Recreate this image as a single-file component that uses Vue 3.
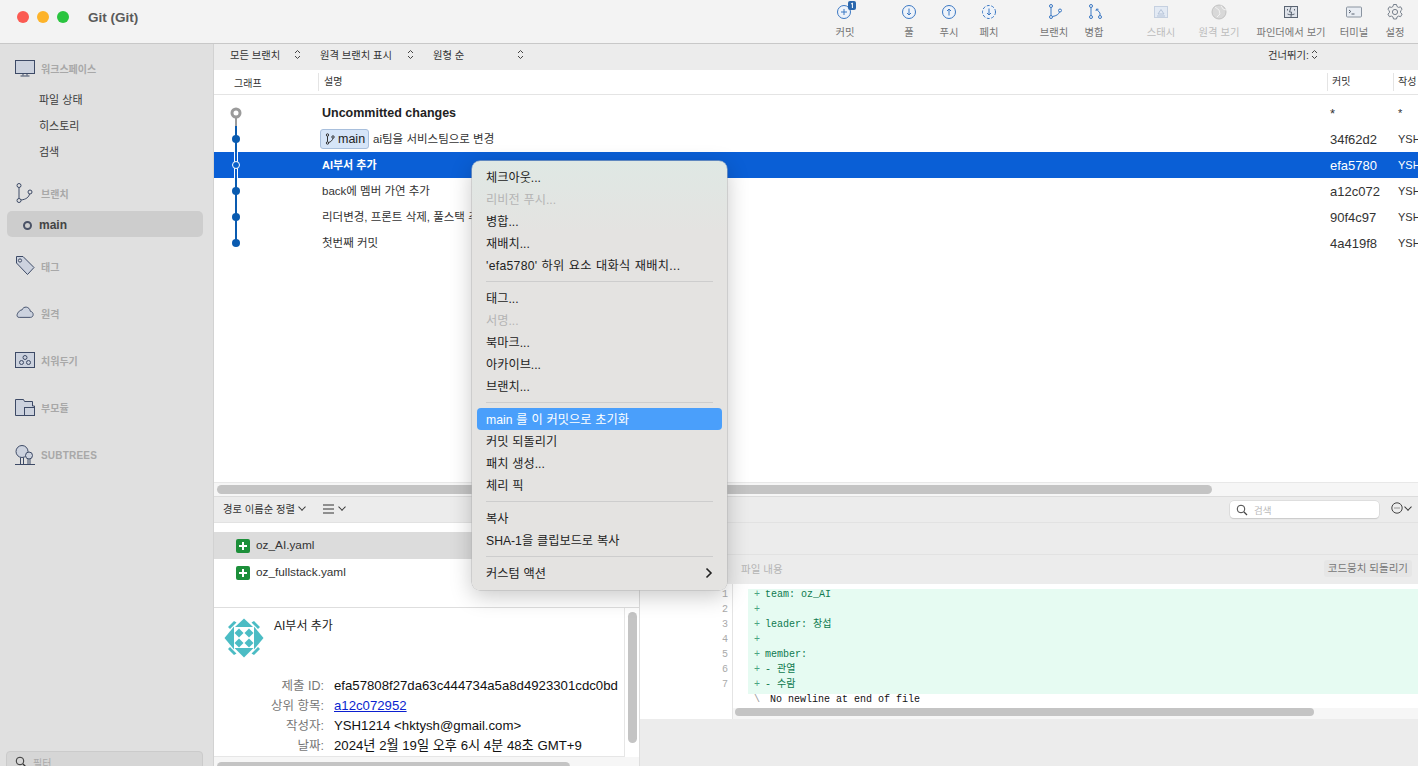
<template>
  <div class="window">
    <!-- 타이틀바 -->
    <header class="titlebar">
      <div class="lights">
        <span class="light red"></span>
        <span class="light yellow"></span>
        <span class="light green"></span>
      </div>
      <div class="win-title">Git (Git)</div>
      <div class="tools">
        <div class="tool w40">
          <svg class="ti" width="24" height="20" viewBox="0 0 24 20">
            <circle cx="11" cy="12" r="6.5" fill="#eef3fa" stroke="#3b78c3" />
            <path d="M11 9v6M8 12h6" stroke="#3b78c3" fill="none" />
            <rect x="15" y="1" width="8" height="9" rx="2" fill="#2b67ad" />
            <path d="M19.400 3v5M18 4.200l1.400-1.200" stroke="#fff" fill="none" />
          </svg>
          <span>커밋</span>
        </div>
        <div class="tool w40 gap24">
          <svg class="ti" width="24" height="20" viewBox="0 0 24 20">
            <circle cx="12" cy="12" r="6.5" fill="#eef3fa" stroke="#3b78c3" />
            <path d="M12 8.500v6.500M10 13l2 2 2-2" stroke="#3b78c3" fill="none" />
          </svg>
          <span>풀</span>
        </div>
        <div class="tool w40">
          <svg class="ti" width="24" height="20" viewBox="0 0 24 20">
            <circle cx="12" cy="12" r="6.5" fill="#eef3fa" stroke="#3b78c3" />
            <path d="M12 15.500V9M10 11l2-2 2 2" stroke="#3b78c3" fill="none" />
          </svg>
          <span>푸시</span>
        </div>
        <div class="tool w40">
          <svg class="ti" width="24" height="20" viewBox="0 0 24 20">
            <circle cx="12" cy="12" r="6.5" fill="#eef3fa" stroke="#3b78c3" stroke-dasharray="3 1.600" />
            <path d="M12 8.500v6.500M10 13l2 2 2-2" stroke="#3b78c3" fill="none" />
          </svg>
          <span>페치</span>
        </div>
        <div class="tool w40 gap25">
          <svg class="ti" width="24" height="20" viewBox="0 0 24 20">
            <g fill="none" stroke="#3b78c3">
              <circle cx="9" cy="6" r="1.500" />
              <circle cx="9" cy="17" r="1.500" />
              <circle cx="18" cy="10.500" r="1.500" />
              <path d="M9 7.500v8M10.400 16.500c4-.5 6.600-2.500 7.200-4.600" />
            </g>
          </svg>
          <span>브랜치</span>
        </div>
        <div class="tool w40">
          <svg class="ti" width="24" height="20" viewBox="0 0 24 20">
            <g fill="none" stroke="#3b78c3">
              <circle cx="9" cy="6" r="1.500" />
              <circle cx="9" cy="17" r="1.500" />
              <circle cx="18" cy="17" r="1.500" />
              <path d="M9 7.500v8M14.500 9l3.500 4v2.500M14 11l.5-2 2 .3" />
            </g>
          </svg>
          <span>병합</span>
        </div>
        <div class="tool w40 off gap27">
          <svg class="ti" width="24" height="20" viewBox="0 0 24 20">
            <rect x="5.500" y="6.500" width="13" height="11" fill="#e3eaf4" stroke="#c5d0e0" />
            <path d="M9 14l3-4.500 3 4.500zM8 16h8" fill="none" stroke="#b5c3d8" />
          </svg>
          <span>스태시</span>
        </div>
        <div class="tool w76 off">
          <svg class="ti" width="24" height="20" viewBox="0 0 24 20">
            <circle cx="12" cy="12" r="7" fill="#d8d8d8" stroke="#c2c2c2" />
            <path d="M8 7l4 3 1 4-3 3M14 5.500l2 3.500 3 1" fill="none" stroke="#f0f0f0" />
          </svg>
          <span>원격 보기</span>
        </div>
        <div class="tool w68">
          <svg class="ti" width="24" height="20" viewBox="0 0 24 20">
            <rect x="5.500" y="6.500" width="13" height="11" fill="#dfe3ea" stroke="#5a6472" />
            <path d="M12 7l-1.500 5h2l-.5 5M8.500 9v1.500M15.500 9v1.500M8.500 14c2 1 5 1 7 0" fill="none" stroke="#5a6472" />
          </svg>
          <span>파인더에서 보기</span>
        </div>
        <div class="tool w58">
          <svg class="ti" width="24" height="20" viewBox="0 0 24 20">
            <rect x="4.500" y="7" width="15" height="10" rx="1" fill="#e9edf3" stroke="#8a94a0" />
            <path d="M7 10l1.800 1.500L7 13M9.500 14h3" fill="none" stroke="#56606e" />
          </svg>
          <span>터미널</span>
        </div>
        <div class="tool w24">
          <svg class="ti" width="24" height="20" viewBox="0 0 24 20">
            <path d="M10.500 4.500h3l.5 2 1.600.9 2-.6 1.500 2.600-1.500 1.400v1.900l1.500 1.400-1.500 2.600-2-.6-1.600.9-.5 2h-3l-.5-2-1.600-.9-2 .6-1.500-2.600 1.500-1.400v-1.900L4.900 9.400l1.500-2.600 2 .6 1.600-.9z" fill="#efefef" stroke="#77808c" />
            <circle cx="12" cy="12" r="2.600" fill="none" stroke="#77808c" />
          </svg>
          <span>설정</span>
        </div>
      </div>
    </header>

    <div class="body">
      <!-- 사이드바 -->
      <aside class="sidebar">
        <section class="side-sec tight">
          <div class="side-head">
            <svg width="20" height="20" viewBox="0 0 20 20">
              <rect x=".5" y="2.500" width="19" height="13" fill="#ccd2de" stroke="#3d4a66" />
              <path d="M8 15.500v2M12 15.500v2M5.500 18h9" stroke="#3d4a66" fill="none" />
            </svg>
            <span>워크스페이스</span>
          </div>
          <div class="side-item">파일 상태</div>
          <div class="side-item">히스토리</div>
          <div class="side-item">검색</div>
        </section>

        <section class="side-sec tight">
          <div class="side-head">
            <svg width="20" height="20" viewBox="0 0 20 20">
              <g fill="none" stroke="#3d4a66">
                <circle cx="4" cy="2.500" r="2" />
                <circle cx="4" cy="17.500" r="2" />
                <circle cx="15" cy="9" r="2" />
                <path d="M4 4.500v11M6 17c5-.5 8-3 8.500-6" />
              </g>
            </svg>
            <span>브랜치</span>
          </div>
          <div class="side-branch">
            <span class="ring"></span>
            <span>main</span>
          </div>
        </section>

        <section class="side-sec tight">
          <div class="side-head">
            <svg width="20" height="20" viewBox="0 0 20 20">
              <path d="M1.500 1h6.500l11 11-6.500 7-11-11.500z" transform="translate(0 -.5)" fill="#ccd2de" stroke="#3d4a66" />
              <circle cx="5" cy="4.500" r="1.600" fill="#e0e0e0" stroke="#3d4a66" />
            </svg>
            <span>태그</span>
          </div>
        </section>

        <section class="side-sec">
          <div class="side-head">
            <svg width="20" height="20" viewBox="0 0 20 20">
              <path d="M4 16h12c4 0 4-6 0-6.500C15 4 8.500 3.500 7 8 3 8 -1 16 4 16z" transform="translate(.5 -.5) scale(.93)" fill="#ccd2de" stroke="#3d4a66" />
            </svg>
            <span>원격</span>
          </div>
        </section>

        <section class="side-sec">
          <div class="side-head">
            <svg width="20" height="20" viewBox="0 0 20 20">
              <rect x=".5" y="2.500" width="19" height="15" fill="#ccd2de" stroke="#3d4a66" />
              <g fill="none" stroke="#3d4a66">
                <circle cx="10" cy="7.500" r="2" />
                <circle cx="6.500" cy="12.500" r="2" />
                <circle cx="13.500" cy="12.500" r="2" />
              </g>
            </svg>
            <span>치워두기</span>
          </div>
        </section>

        <section class="side-sec wide">
          <div class="side-head">
            <svg width="20" height="20" viewBox="0 0 20 20">
              <path d="M.5 2.500h8l1 2h8V9H19.500v9.500H.5z" fill="#ccd2de" stroke="#3d4a66" />
              <rect x="9.500" y="10.500" width="10" height="8" fill="#ccd2de" stroke="#3d4a66" />
            </svg>
            <span>부모듈</span>
          </div>
        </section>

        <section class="side-sec">
          <div class="side-head">
            <svg width="20" height="20" viewBox="0 0 20 20">
              <g fill="#ccd2de" stroke="#3d4a66">
                <circle cx="7" cy="6.500" r="6" />
                <circle cx="14" cy="10.500" r="3.500" />
                <path d="M5.500 12.500v6.500M8.500 12.500v6.500M13 14v5M15 14v5M0 19.500h20" fill="none" />
              </g>
            </svg>
            <span class="latin">SUBTREES</span>
          </div>
        </section>

        <div class="side-filter">
          <svg width="12" height="12" viewBox="0 0 12 12">
            <circle cx="5" cy="5" r="3.800" fill="none" stroke="#333" />
            <path d="M8 8l3 3" stroke="#333" stroke-width="1.300" />
          </svg>
          <span>필터</span>
        </div>
      </aside>

      <main class="main">
        <!-- 필터 바 -->
        <div class="filter-bar">
          <div v-for="s in selects" :key="s.label" class="sel" :class="s.cls">
            <span>{{ s.label }}</span>
            <svg width="7" height="11" viewBox="0 0 7 11">
              <path d="M1 4l2.500-2.500L6 4M1 7l2.500 2.500L6 7" fill="none" stroke="#444" />
            </svg>
          </div>
        </div>

        <!-- 컬럼 헤더 -->
        <div class="col-head">
          <div class="col-graph">그래프</div>
          <div class="col-desc">설명</div>
          <div class="col-commit">커밋</div>
          <div class="col-author">작성</div>
        </div>

        <!-- 커밋 목록 -->
        <div class="commits">
          <div v-for="row in commits" :key="row.id" class="commit" :class="{ selected: row.selected }">
            <svg class="graph" width="104" height="26" viewBox="0 0 104 26">
              <template v-if="row.kind === 'top'">
                <path d="M22 13v13" stroke="#9b9b9b" stroke-width="2" />
                <circle cx="22" cy="13" r="4" fill="#fff" stroke="#9b9b9b" stroke-width="3" />
              </template>
              <template v-else-if="row.selected">
                <path d="M22 0v26" stroke="#fff" stroke-width="4" />
                <path d="M22 0v26" stroke="#0a5fca" stroke-width="2" />
                <circle cx="22" cy="13" r="3.500" fill="#0a5fca" stroke="#fff" />
              </template>
              <template v-else>
                <path :d="row.kind === 'last' ? 'M22 0v13' : 'M22 0v26'" stroke="#0a5bb0" stroke-width="2" />
                <circle cx="22" cy="13" r="4" fill="#0a5bb0" />
              </template>
            </svg>
            <div class="desc" :class="{ strong: row.kind === 'top' }">
              <span v-if="row.branch" class="branch-tag">
                <svg width="10" height="12" viewBox="0 0 10 12">
                  <g fill="none" stroke="#333">
                    <circle cx="2.500" cy="2" r="1.200" />
                    <circle cx="2.500" cy="10" r="1.200" />
                    <circle cx="8" cy="4" r="1.200" />
                    <path d="M2.500 3.200v5.600M3.500 9.500C6 9 7.500 7 8 5.200" />
                  </g>
                </svg>
                main
              </span>
              <span class="desc-text">{{ row.text }}</span>
            </div>
            <div class="hash">{{ row.hash }}</div>
            <div class="author">{{ row.author }}</div>
          </div>
        </div>

        <div class="hscroll list-scroll"><div class="thumb"></div></div>

        <!-- 하단 툴바 -->
        <div class="sub-toolbar">
          <div class="sort">경로 이름순 정렬 <i class="chev"></i></div>
          <svg class="list-ic" width="11" height="10" viewBox="0 0 11 10">
            <path d="M0 1h11M0 5h11M0 9h11" stroke="#333" />
          </svg>
          <i class="chev list-chev"></i>
          <div class="search">
            <svg width="12" height="12" viewBox="0 0 12 12">
              <circle cx="5" cy="5" r="3.800" fill="none" stroke="#444" />
              <path d="M8 8l3 3" stroke="#444" stroke-width="1.300" />
            </svg>
            <span>검색</span>
          </div>
          <svg class="more" width="12" height="12" viewBox="0 0 12 12">
            <circle cx="6" cy="6" r="5.200" fill="none" stroke="#444" />
            <path d="M3.500 6h1M5.500 6h1M7.500 6h1" stroke="#444" />
          </svg>
          <i class="chev list-chev"></i>
        </div>

        <div class="lower">
          <!-- 왼쪽: 파일 목록 + 커밋 정보 -->
          <div class="left-pane">
            <div class="files">
              <div v-for="f in files" :key="f.name" class="file" :class="{ on: f.on }">
                <span class="added"></span>
                <span class="file-name">{{ f.name }}</span>
              </div>
            </div>
            <div class="details">
              <div class="info">
                <div class="info-top">
                  <svg class="avatar" width="40" height="40" viewBox="0 0 40 40">
                    <g fill="#4bbcc4">
                      <path d="M20 .5L29 9H11z" />
                      <path d="M20 39.500L29.500 30h-19z" />
                      <path d="M.5 20L10 8.500v23z" />
                      <path d="M39.500 20L30 8.500v23z" />
                      <path d="M15 10.500l4.500 4.500-4.500 4.500-4.500-4.500z" />
                      <path d="M25 10.500l4.500 4.500-4.500 4.500-4.500-4.500z" />
                      <path d="M15 20.500l4.500 4.500-4.500 4.500-4.500-4.500z" />
                      <path d="M25 20.500l4.500 4.500-4.500 4.500-4.500-4.500z" />
                      <path d="M4 9l6-6 2.500 1.500L6 11zM36 9l-6-6-2.500 1.500L34 11zM4 31l6 6 2.500-1.500L6 29zM36 31l-6 6-2.500-1.500L34 29z" />
                    </g>
                  </svg>
                  <div class="info-title">AI부서 추가</div>
                </div>
                <dl class="meta">
                  <dt>제출 ID:</dt>
                  <dd>efa57808f27da63c444734a5a8d4923301cdc0bd</dd>
                  <dt>상위 항목:</dt>
                  <dd><a class="link">a12c072952</a></dd>
                  <dt>작성자:</dt>
                  <dd>YSH1214 &lt;hktysh@gmail.com&gt;</dd>
                  <dt>날짜:</dt>
                  <dd>2024년 2월 19일 오후 6시 4분 48초 GMT+9</dd>
                </dl>
              </div>
              <div class="vscroll"><div class="vthumb"></div></div>
            </div>
            <div class="hscroll info-scroll"><div class="thumb"></div></div>
          </div>

          <!-- 오른쪽: diff -->
          <div class="right-pane">
            <div class="diff-gap"></div>
            <div class="diff-head">
              <span class="diff-name">파일 내용</span>
              <span class="diff-btn">코드뭉치 되돌리기</span>
            </div>
            <div class="diff-body">
              <div class="numbers">
                <div v-for="(l, i) in diffLines" :key="i">{{ i + 1 }}</div>
              </div>
              <div class="code">
                <div class="added-lines">
                  <div v-for="(l, i) in diffLines" :key="i" class="code-line">
                    <span class="plus">+</span><span>{{ l }}</span>
                  </div>
                </div>
                <div class="code-line eof"><span class="slash">\</span><span>No newline at end of file</span></div>
                <div class="hscroll code-scroll"><div class="thumb"></div></div>
              </div>
            </div>
          </div>
        </div>
      </main>
    </div>

    <!-- 컨텍스트 메뉴 -->
    <div class="menu">
      <template v-for="(group, g) in menu" :key="g">
        <div v-if="g > 0" class="menu-sep"></div>
        <div
          v-for="m in group"
          :key="m.label"
          class="menu-item"
          :class="{ disabled: m.disabled, active: m.active, spread: m.spread }"
        >
          <span>{{ m.label }}</span>
          <svg v-if="m.sub" width="8" height="12" viewBox="0 0 8 12">
            <path d="M1.500 1.500L6 6l-4.500 4.500" fill="none" stroke="#222" stroke-width="1.600" />
          </svg>
        </div>
      </template>
    </div>
  </div>
</template>

<script setup>
const selects = [
  { label: '모든 브랜치', cls: 'sel-a' },
  { label: '원격 브랜치 표시', cls: 'sel-b' },
  { label: '원형 순', cls: 'sel-c' },
  { label: '건너뛰기:', cls: 'sel-d' },
]

const commits = [
  { id: 0, kind: 'top', text: 'Uncommitted changes', hash: '*', author: '*' },
  { id: 1, kind: 'mid', branch: true, text: 'ai팀을 서비스팀으로 변경', hash: '34f62d2', author: 'YSH' },
  { id: 2, kind: 'mid', selected: true, text: 'AI부서 추가', hash: 'efa5780', author: 'YSH' },
  { id: 3, kind: 'mid', text: 'back에 멤버 가연 추가', hash: 'a12c072', author: 'YSH' },
  { id: 4, kind: 'mid', text: '리더변경, 프론트 삭제, 풀스택 추가', hash: '90f4c97', author: 'YSH' },
  { id: 5, kind: 'last', text: '첫번째 커밋', hash: '4a419f8', author: 'YSH' },
]

const files = [
  { name: 'oz_AI.yaml', on: true },
  { name: 'oz_fullstack.yaml' },
]

const diffLines = ['team: oz_AI', '', 'leader: 창섭', '', 'member:', '- 관열', '- 수람']

const menu = [
  [
    { label: '체크아웃...' },
    { label: '리비전 푸시...', disabled: true },
    { label: '병합...' },
    { label: '재배치...' },
    { label: "'efa5780' 하위 요소 대화식 재배치...", spread: true },
  ],
  [
    { label: '태그...' },
    { label: '서명...', disabled: true },
    { label: '북마크...' },
    { label: '아카이브...' },
    { label: '브랜치...' },
  ],
  [
    { label: 'main 를 이 커밋으로 초기화', active: true },
    { label: '커밋 되돌리기' },
    { label: '패치 생성...' },
    { label: '체리 픽' },
  ],
  [
    { label: '복사' },
    { label: 'SHA-1을 클립보드로 복사' },
  ],
  [{ label: '커스텀 액션', sub: true }],
]
</script>

<style scoped>
.window {
  position: relative;
  width: 1418px;
  height: 766px;
  overflow: hidden;
  display: flex;
  flex-direction: column;
  background: #ececec;
  font-family: "Liberation Sans", "Noto Sans CJK KR", sans-serif;
  color: #222;
}

/* 타이틀바 */
.titlebar {
  flex: none;
  height: 44px;
  box-sizing: border-box;
  display: flex;
  align-items: flex-start;
  background: #f3f3f3;
  border-bottom: 1px solid #c8c8c8;
}

.lights {
  display: flex;
  gap: 8px;
  margin: 11px 0 0 17px;
}

.light {
  width: 12px;
  height: 12px;
  border-radius: 50%;
}

.red { background: #fb5a52; }
.yellow { background: #fdb32a; }
.green { background: #2ac43f; }

.win-title {
  margin: 9px 0 0 19px;
  font-size: 13.500px;
  font-weight: 700;
  line-height: 17px;
  color: #5a5a5a;
}

.tools {
  margin-left: auto;
  margin-right: 11px;
  display: flex;
}

.tool {
  display: flex;
  flex-direction: column;
  align-items: center;
  font-size: 10.300px;
  line-height: 14px;
  color: #757575;
  white-space: nowrap;
}

.ti {
  height: 20px;
  margin-bottom: 6px;
}

.tool.off { color: #bcbcbc; }
.w24 { width: 24px; }
.w40 { width: 40px; }
.w58 { width: 58px; }
.w68 { width: 68px; }
.w76 { width: 76px; }
.gap24 { margin-left: 24px; }
.gap25 { margin-left: 25px; }
.gap27 { margin-left: 27px; }

.body {
  flex: 1;
  min-height: 0;
  display: flex;
}

/* 사이드바 */
.sidebar {
  flex: none;
  width: 214px;
  box-sizing: border-box;
  padding-top: 11px;
  display: flex;
  flex-direction: column;
  background: #e0e0e0;
  border-right: 1px solid #d2d2d2;
  overflow: hidden;
}

.side-sec { margin-bottom: 21px; }
.side-sec.tight { margin-bottom: 16px; }
.side-sec.wide { margin-bottom: 22px; }

.side-head {
  height: 26px;
  margin-bottom: 5px;
  padding-left: 15px;
  display: flex;
  align-items: center;
  gap: 6px;
  font-size: 10px;
  font-weight: 700;
  color: #a8a8a8;
}

.side-head .latin { letter-spacing: .2px; }
.side-sec:not(.tight) .side-head { margin-bottom: 0; }

.side-item {
  height: 26px;
  line-height: 28px;
  padding-left: 39px;
  font-size: 11px;
  color: #3c3c3c;
}

.side-branch {
  height: 26px;
  box-sizing: border-box;
  padding: 2px 0 0 16px;
  margin: 0 10px 0 7px;
  display: flex;
  align-items: center;
  gap: 7px;
  border-radius: 5px;
  background: #cdcdcd;
  font-size: 12px;
  font-weight: 700;
  color: #444;
}

.ring {
  width: 5px;
  height: 5px;
  border: 2px solid #4a5266;
  border-radius: 50%;
}

.side-filter {
  margin: auto 10px -7px 6px;
  height: 20px;
  flex: none;
  padding-left: 8px;
  display: flex;
  align-items: center;
  gap: 6px;
  border-radius: 4px 4px 0 0;
  background: #d6d6d6;
  border: 1px solid #cbcbcb;
  font-size: 10px;
  color: #aaa;
}

/* 메인 */
.main {
  flex: 1;
  min-width: 0;
  display: flex;
  flex-direction: column;
  background: #fff;
}

.filter-bar {
  flex: none;
  height: 26px;
  box-sizing: border-box;
  padding-bottom: 5px;
  display: flex;
  align-items: center;
  background: #ececec;
  font-size: 10.300px;
  color: #333;
}

.sel {
  display: flex;
  align-items: center;
  justify-content: space-between;
}

.sel-a { width: 71px; margin-left: 16px; }
.sel-b { width: 94px; margin-left: 19px; }
.sel-c { width: 91px; margin-left: 19px; }
.sel-d { width: 50px; margin-left: auto; margin-right: 100px; }

.col-head {
  flex: none;
  height: 25px;
  display: flex;
  align-items: center;
  border-bottom: 1px solid #e4e4e4;
  box-sizing: border-box;
  font-size: 10px;
  color: #333;
  background: #fff;
}

.col-graph {
  width: 104px;
  padding-left: 20px;
  box-sizing: border-box;
}

.col-desc {
  flex: 1;
  padding-left: 5px;
  border-left: 1px solid #e4e4e4;
  line-height: 18px;
}

.col-commit {
  width: 66px;
  padding-left: 4px;
  box-sizing: border-box;
  border-left: 1px solid #e4e4e4;
  line-height: 18px;
}

.col-author {
  width: 25px;
  padding-left: 4px;
  box-sizing: border-box;
  border-left: 1px solid #e4e4e4;
  line-height: 18px;
  white-space: nowrap;
}

.commits {
  flex: none;
  height: 387px;
  padding-top: 5px;
  box-sizing: border-box;
  background: #fff;
}

.commit {
  height: 26px;
  display: flex;
  align-items: center;
  font-size: 11.500px;
  color: #333;
}

.commit.selected {
  background: #0a5fd6;
  color: #fff;
}

.commit.selected .desc {
  font-size: 11px;
  font-weight: 700;
}

.graph { flex: none; }

.desc {
  flex: 1;
  min-width: 0;
  padding-left: 4px;
  display: flex;
  align-items: center;
  gap: 4px;
  white-space: nowrap;
}

.desc-text { margin-top: -2px; }
.strong .desc-text { margin-top: 0; }

.desc.strong {
  font-size: 12.500px;
  font-weight: 700;
  color: #222;
}

.branch-tag {
  margin-left: -2px;
  height: 18px;
  padding: 0 3px 0 4px;
  display: inline-flex;
  align-items: center;
  gap: 3px;
  border: 1px solid #a8bfdc;
  border-radius: 3px;
  background: #d6e5f8;
  font-size: 12.500px;
  color: #222;
}

.hash {
  width: 66px;
  padding-left: 3px;
  box-sizing: border-box;
  font-size: 13px;
}

.author {
  width: 25px;
  padding-left: 5px;
  box-sizing: border-box;
  font-size: 11px;
  white-space: nowrap;
}

.hscroll {
  flex: none;
  background: #f6f6f6;
}

.thumb {
  height: 9px;
  border-radius: 5px;
  background: #c4c4c4;
}

.list-scroll {
  height: 15px;
  padding: 2px 0 0 3px;
  box-sizing: border-box;
  border-top: 1px solid #e8e8e8;
  border-bottom: 1px solid #dcdcdc;
}

.list-scroll .thumb { width: 995px; }

.sub-toolbar {
  flex: none;
  height: 26px;
  box-sizing: border-box;
  padding: 0 7px 0 9px;
  display: flex;
  align-items: center;
  gap: 5px;
  background: #ececec;
  border-bottom: 1px solid #e2e2e2;
}

.sort {
  display: flex;
  align-items: center;
  gap: 4px;
  margin: -3px 13px 0 0;
  font-size: 10.300px;
  color: #333;
}

.chev {
  width: 5px;
  height: 5px;
  margin-top: -3px;
  border-right: 1.300px solid #333;
  border-bottom: 1.300px solid #333;
  transform: rotate(45deg) scale(.9);
}

.list-chev { margin-top: -5px; }
.list-ic { margin-top: -2px; }

.search {
  margin-left: auto;
  width: 149px;
  height: 17px;
  box-sizing: border-box;
  padding-left: 6px;
  display: flex;
  align-items: center;
  gap: 6px;
  border-radius: 4px;
  background: #fff;
  box-shadow: 0 0 0 .5px #cfcfcf, 0 1px 1px #c8c8c8;
  font-size: 9.500px;
  color: #bbb;
}

.more {
  margin: -3px -3px 0 7px;
}

.lower {
  flex: 1;
  min-height: 0;
  display: flex;
}

.left-pane {
  flex: none;
  width: 425px;
  display: flex;
  flex-direction: column;
  background: #fff;
  border-right: 1px solid #dedede;
}

.files {
  flex: none;
  height: 85px;
  padding-top: 9px;
  box-sizing: border-box;
  border-bottom: 1px solid #dedede;
}

.file {
  height: 27px;
  display: flex;
  align-items: center;
  gap: 6px;
  padding-left: 22px;
  font-size: 11.800px;
  color: #333;
}

.file-name { margin-top: -2px; }

.file.on { background: #dcdcdc; }

.added {
  width: 14px;
  height: 14px;
  border-radius: 2px;
  background:
    linear-gradient(#fff, #fff) center / 8px 2px no-repeat,
    linear-gradient(#fff, #fff) center / 2px 8px no-repeat,
    #1c8f3a;
}

.details {
  flex: 1;
  min-height: 0;
  display: flex;
  overflow: hidden;
}

.info {
  flex: 1;
  min-width: 0;
  padding: 10px 0 0 10px;
  box-sizing: border-box;
  border-right: 1px solid #e6e6e6;
  border-bottom: 1px solid #e6e6e6;
}

.info-top {
  display: flex;
  gap: 10px;
  height: 58px;
}

.info-title {
  font-size: 12px;
  line-height: 16px;
  color: #222;
}

.meta {
  margin: 0;
  display: grid;
  grid-template-columns: 100px 1fr;
  column-gap: 10px;
  font-size: 13.200px;
  line-height: 20px;
  white-space: nowrap;
}

.meta dt {
  font-size: 12.500px;
  text-align: right;
  color: #777;
}

.meta dd {
  margin: 0;
  color: #111;
}

.link {
  color: #0b1fd0;
  text-decoration: underline;
}

.vscroll {
  flex: none;
  width: 14px;
  padding: 4px 2px 0 3px;
  box-sizing: border-box;
}

.vthumb {
  height: 131px;
  border-radius: 5px;
  background: #c4c4c4;
}

.info-scroll {
  height: 9px;
  padding: 5px 0 0 3px;
  box-sizing: border-box;
}

.info-scroll .thumb {
  width: 353px;
}

/* diff */
.right-pane {
  flex: 1;
  min-width: 0;
  display: flex;
  flex-direction: column;
  background: #ececec;
}

.diff-gap {
  flex: none;
  height: 31px;
  border-bottom: 1px solid #e2e2e2;
}

.diff-head {
  flex: none;
  height: 29px;
  padding: 0 6px 0 101px;
  display: flex;
  align-items: center;
  justify-content: space-between;
  font-size: 10.500px;
  color: #b5b5b5;
}

.diff-name { margin-top: -3px; }

.diff-btn {
  height: 17px;
  line-height: 17px;
  padding: 0 4px;
  margin-top: -2px;
  border-radius: 3px;
  background: #e6e6e6;
  color: #777;
}

.diff-body {
  flex: none;
  height: 135px;
  display: flex;
  background: #fff;
  font-family: "Liberation Mono", "Noto Sans CJK KR", monospace;
  font-size: 10px;
}

.numbers {
  flex: none;
  width: 93px;
  box-sizing: border-box;
  padding: 3px 4px 0 0;
  border-right: 1px solid #e4e4e4;
  text-align: right;
  line-height: 15px;
  color: #aaa;
}

.code {
  flex: 1;
  min-width: 0;
  padding-top: 5px;
  box-sizing: border-box;
  display: flex;
  flex-direction: column;
}

.added-lines {
  margin-left: 15px;
  background: #e6fbf2;
  color: #0e7a4f;
}

.code-line {
  height: 15px;
  line-height: 11px;
  white-space: nowrap;
}

.plus {
  display: inline-block;
  width: 17px;
  padding-left: 6px;
  box-sizing: border-box;
  color: #4aa583;
}

.eof {
  display: flex;
  color: #111;
}

.slash {
  width: 37px;
  padding-left: 21px;
  box-sizing: border-box;
  color: #999;
}

.code-scroll {
  margin-top: auto;
  height: 11px;
  padding: 0 0 0 2px;
}

.code-scroll .thumb {
  width: 579px;
  height: 8px;
}

/* 컨텍스트 메뉴 */
.menu {
  position: absolute;
  left: 472px;
  top: 161px;
  width: 255px;
  height: 429px;
  box-sizing: border-box;
  padding: 5px 5px 6px;
  border-radius: 8px;
  background: linear-gradient(#dfe8e4, #e4e3e1 70px);
  box-shadow: 0 0 0 .5px #b5b5b5, 0 6px 22px rgba(0, 0, 0, .22);
  font-size: 12.200px;
  word-spacing: .5px;
  color: #222;
}

.menu-item {
  height: 22px;
  padding: 0 9px;
  display: flex;
  align-items: center;
  justify-content: space-between;
  border-radius: 4px;
}

.menu-item.spread { letter-spacing: .3px; }
.menu-item.disabled { color: #b4b4b4; }

.menu-item.active {
  background: #4a9ffb;
  color: #fff;
}

.menu-sep {
  height: 1px;
  margin: 5px 9px;
  background: #cdcdcd;
}
</style>

<style>
body {
  margin: 0;
  overflow: hidden;
}
</style>
